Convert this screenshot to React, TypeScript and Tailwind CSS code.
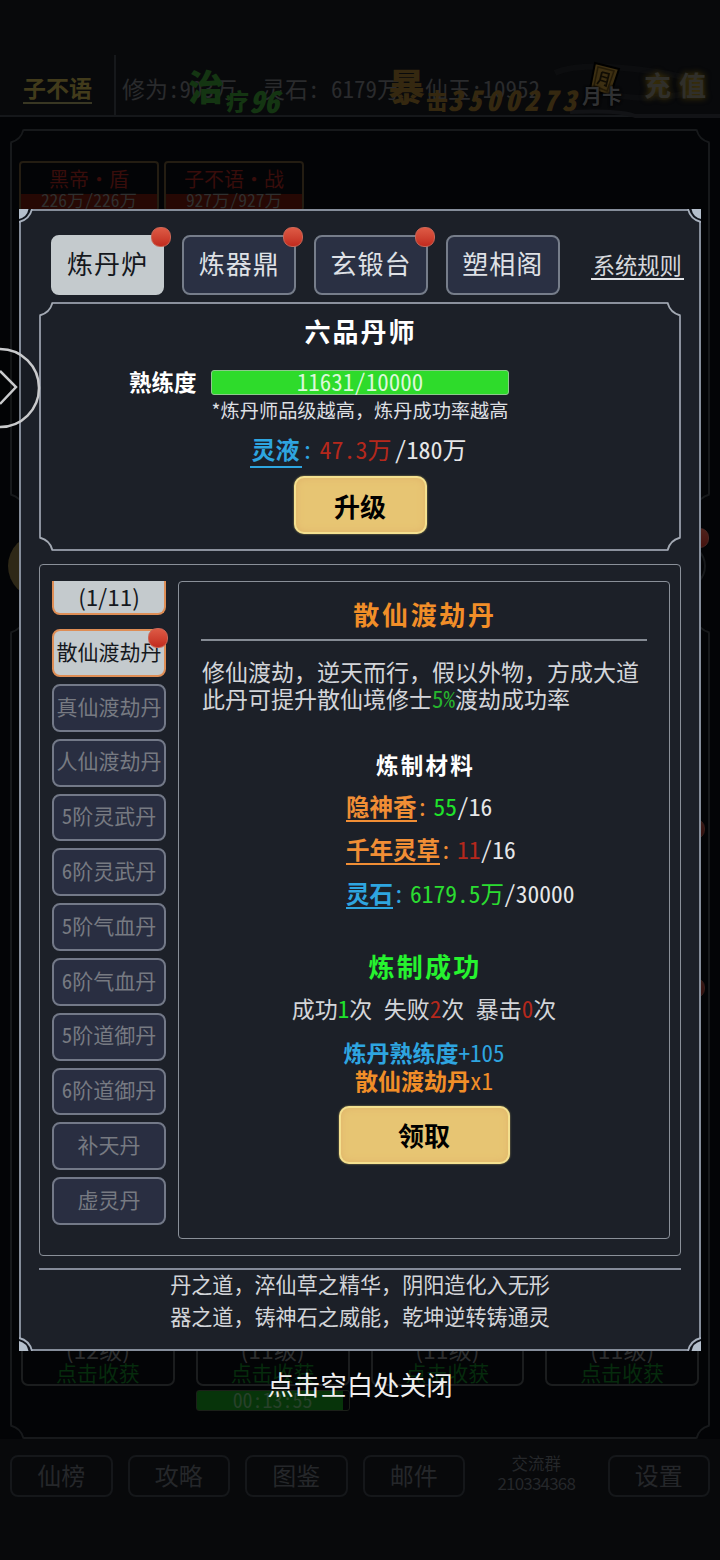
import type { ReactNode } from "react";

const TABS = [
  { label: "炼丹炉", active: true, dot: true },
  { label: "炼器鼎", active: false, dot: true },
  { label: "玄锻台", active: false, dot: true },
  { label: "塑相阁", active: false, dot: false },
];

const RECIPES = [
  "真仙渡劫丹",
  "人仙渡劫丹",
  "5阶灵武丹",
  "6阶灵武丹",
  "5阶气血丹",
  "6阶气血丹",
  "5阶道御丹",
  "6阶道御丹",
  "补天丹",
  "虚灵丹",
];

const PLOTS = ["(12级)", "(11级)", "(11级)", "(11级)"];

const NAV_LEFT = ["仙榜", "攻略", "图鉴", "邮件"];

function RedDot({ className }: { className: string }) {
  return (
    <span
      className={`absolute size-5 rounded-[9px] border border-[#c96555] bg-gradient-to-b from-[#dd5a45] to-[#c22a1e] ${className}`}
    />
  );
}

// Concave corner that replaces the square corner of a bordered box
function Notch({ className, fill, stroke }: { className: string; fill: string; stroke: string }) {
  return (
    <svg viewBox="0 0 14 14" className={`absolute size-3.5 ${className}`}>
      <path d="M0 0H13.5Q11 11 0 13.5Z" fill={fill} />
      <path d="M13.5 0.5Q11 11 0.5 13.5" fill="none" stroke={stroke} strokeWidth="1.8" />
    </svg>
  );
}

function Notches({ fill, stroke }: { fill: string; stroke: string }) {
  return (
    <>
      <Notch className="-left-0.5 -top-0.5" fill={fill} stroke={stroke} />
      <Notch className="-right-0.5 -top-0.5 -scale-x-100" fill={fill} stroke={stroke} />
      <Notch className="-bottom-0.5 -left-0.5 -scale-y-100" fill={fill} stroke={stroke} />
      <Notch className="-bottom-0.5 -right-0.5 -scale-100" fill={fill} stroke={stroke} />
    </>
  );
}

function ModalCorner({ className }: { className: string }) {
  return (
    <svg viewBox="0 0 14 14" className={`absolute size-3.5 ${className}`}>
      <path d="M0 0H13Q11 11 0 13Z" fill="#10141c" />
      <path d="M0 0H9.5Q8 8 0 10Z" fill="#b4bfcc" />
      <path d="M13 0Q10.5 10.5 0 13" fill="none" stroke="#a7b0bd" strokeWidth="1.8" />
    </svg>
  );
}

function GoldButton({ children, className }: { children: ReactNode; className: string }) {
  return (
    <button
      className={`flex h-[58px] shrink-0 items-center justify-center rounded-[10px] border-2 border-[#f4e08f] bg-[#e7c573] text-[26px] font-bold text-black shadow-[inset_0_0_7px_#e0b36a,0_0_2px_#a79a5c] ${className}`}
    >
      {children}
    </button>
  );
}

function Material({
  name,
  have,
  need,
  nameClass,
  haveClass,
}: {
  name: string;
  have: string;
  need: string;
  nameClass: string;
  haveClass: string;
}) {
  return (
    <div className="flex h-[30px] items-start whitespace-nowrap text-[23.5px] leading-[28px]">
      <span className={`h-[30px] border-b-2 border-current font-bold ${nameClass}`}>{name}</span>
      <span className={`w-[17px] ${nameClass}`}>:</span>
      <span className={haveClass}>{have}</span>
      <span className="text-[#e6e7e9]">/{need}</span>
    </div>
  );
}

function Background() {
  return (
    <div className="flex h-[1560px] flex-col bg-[#030406]">
      <header className="relative flex h-[117px] shrink-0 items-end border-b-2 border-[#15171a] bg-[#08090b]">
        <div className="flex h-[60px] w-[116px] justify-end border-r-2 border-[#16181b] pr-[22px] pt-[17px]">
          <span className="h-[32px] border-b-2 border-[#393723] text-[23px] font-bold leading-[30px] text-[#423b1b]">
            子不语
          </span>
        </div>
        <div className="flex h-[60px] gap-[25px] whitespace-nowrap pl-1.5 pt-[18px] text-[23px] leading-[30px] text-[#2a2b2d]">
          <span>修为:903万</span>
          <span>灵石: 6179万</span>
          <span>仙玉:10952</span>
        </div>
        <svg viewBox="0 0 170 60" className="absolute left-[550px] top-[58px] h-[60px] w-[170px]">
          <path d="M5 15Q30 3 100 13T140 35Q90 45 60 35" fill="none" stroke="#0c0d0f" strokeWidth="6" />
          <path d="M20 54Q70 52 85 58H170" fill="none" stroke="#121316" strokeWidth="4" />
        </svg>
        <span className="absolute left-[188px] top-[64px] text-[36px] font-black leading-[42px] text-[#143512]">治</span>
        <span className="absolute left-[226px] top-[86px] flex items-center text-[23px] font-black leading-[28px] text-[#143512]">
          疗
          <span className="text-[30px] italic">96</span>
        </span>
        <span className="absolute left-[388px] top-[64px] text-[37px] font-black leading-[42px] text-[#352810]">暴</span>
        <span className="absolute left-[426px] top-[85px] flex items-center text-[22px] font-black leading-[28px] text-[#352810]">
          击
          <span className="text-[28px] italic tracking-[5px]">3500273</span>
        </span>
        <svg viewBox="0 0 34 38" className="absolute left-[588px] top-[60px] h-[38px] w-[34px]">
          <path d="M7 3L31 9L22 36L2 29Z" fill="#3d2f12" stroke="#000" strokeWidth="2" />
          <path d="M10 7L26 11L19 31L6 26Z" fill="none" stroke="#241b08" strokeWidth="1.5" />
          <path d="M14 12L21 14L18 26L16 25M14 12L12 20L9 24M13 16L19 18M12 20L18 22" fill="none" stroke="#100c04" strokeWidth="1.8" />
        </svg>
        <span className="absolute left-[582px] top-[83px] text-[20px] font-bold leading-[26px] text-[#303133] [text-shadow:0_0_3px_#000,0_0_2px_#000]">
          月卡
        </span>
        <span className="absolute left-[644px] top-[68px] text-[27px] font-bold leading-[34px] tracking-[8px] text-[#302f2a] [text-shadow:0_0_6px_#4d3d08]">
          充值
        </span>
      </header>

      <section className="relative mx-2.5 mt-3 flex h-[379px] shrink-0 gap-[5px] border-2 border-[#17191b] px-[7px] pt-[30px]">
        <Notches fill="#030406" stroke="#17191b" />
        <div className="flex h-[50px] w-[140px] flex-col rounded-[4px] border-2 border-[#241d12] text-center">
          <span className="h-[31px] text-[20px] leading-[32px] text-[#380d0b]">黑帝·盾</span>
          <span className="h-[17px] bg-[#260804] text-[17.5px] leading-[11px] text-[#30302f]">226万/226万</span>
        </div>
        <div className="flex h-[50px] w-[140px] flex-col rounded-[4px] border-2 border-[#241d12] text-center">
          <span className="h-[31px] text-[20px] leading-[32px] text-[#380d0b]">子不语·战</span>
          <span className="h-[17px] bg-[#260804] text-[17.5px] leading-[11px] text-[#30302f]">927万/927万</span>
        </div>
      </section>

      <div className="flex h-[111px] shrink-0 items-center justify-between px-2 pt-1">
        <span className="size-16 rounded-full bg-[#2e2817]" />
        <span className="relative mr-1.5 size-[46px] rounded-full border-2 border-[#17191b]">
          <RedDot className="-right-[5px] -top-[17px] opacity-35" />
        </span>
      </div>

      <section className="relative mx-2.5 flex h-[820px] shrink-0 flex-col justify-end border-2 border-[#17191b] px-[9px] pb-[26px]">
        <Notches fill="#030406" stroke="#17191b" />
        <RedDot className="right-[3px] top-[198px] opacity-25" />
        <RedDot className="right-[3px] top-[357px] opacity-25" />
        <div className="flex gap-[21px]">
          {PLOTS.map((level, i) => (
            <div key={i} className="w-[154px]">
              <div className="h-[50px] rounded-[7px] border-2 border-[#1b1d1e] text-center">
                <div className="h-[25px] text-[23px] leading-[22px] text-[#2c2d2e] [font-feature-settings:normal]">
                  {level}
                </div>
                <div className="text-[21px] leading-[19px] text-[#062b0d]">点击收获</div>
              </div>
              <div className="mt-1 h-[21px]">
                {i === 1 && (
                  <div className="h-full rounded-[3px] border border-[#1b2019] bg-gradient-to-r from-[#07340a] from-[96%] to-[#030406] to-[96%] text-center text-[20px] leading-[18px] text-[#27412a]">
                    00:13:55
                  </div>
                )}
              </div>
            </div>
          ))}
        </div>
      </section>

      <footer className="flex flex-1 items-start gap-[15px] bg-[#08090b] px-2.5 pt-4 text-[24px] text-[#25272a]">
        {NAV_LEFT.map((label) => (
          <span
            key={label}
            className="flex h-[42px] w-[102.5px] items-center justify-center rounded-[8px] border-2 border-[#15171a] pb-0.5"
          >
            {label}
          </span>
        ))}
        <span className="-mt-0.5 flex flex-1 flex-col items-center text-[16.5px] leading-[20px] [font-feature-settings:normal]">
          交流群
          <span className="text-[17px] tracking-[-0.8px]">210334368</span>
        </span>
        <span className="flex h-[42px] w-[102.5px] items-center justify-center rounded-[8px] border-2 border-[#15171a] pb-0.5">
          设置
        </span>
      </footer>
    </div>
  );
}

function MasteryPanel() {
  return (
    <section className="relative mt-[7px] flex h-[249px] flex-col items-center border-2 border-[#8b919d]">
      <Notches fill="#1c2028" stroke="#a3a9b3" />
      <h2 className="mt-[11px] pl-px text-[26px] font-bold leading-[32px] tracking-[2px] text-white">六品丹师</h2>
      <div className="mt-[23px] flex h-[25px] w-full items-start pl-[88px]">
        <span className="w-[82px] text-[22.5px] font-bold leading-[23px] text-white">熟练度</span>
        <div className="h-[25px] w-[298px] rounded-[3px] border border-[#8dc98d] bg-[#2edb2b] text-center text-[23px] leading-[21px] text-[#dcf8da]">
          11631/10000
        </div>
      </div>
      <p className="mt-1 whitespace-nowrap text-[19.2px] leading-[22px] text-[#dddfe2] [font-feature-settings:normal]">
        *炼丹师品级越高，炼丹成功率越高
      </p>
      <div className="mt-[14px] flex h-[33px] whitespace-nowrap pr-1 text-[24px] leading-[28px]">
        <span className="h-[33px] border-b-2 border-[#2ea5e0] px-0.5 font-bold text-[#2ea5e0]">灵液</span>
        <span className="w-[18px] text-[#2ea5e0]">:</span>
        <span className="text-[#b5281c]">47.3万</span>
        <span className="ml-[3px] text-[#e6e7e9]">/180万</span>
      </div>
      <GoldButton className="mt-2 w-[133px]">升级</GoldButton>
    </section>
  );
}

function RecipeList() {
  return (
    <div className="flex w-[114px] shrink-0 flex-col gap-[7px] text-[21px]">
      <div className="mb-[7px] h-[34px] rounded-b-[8px] border-2 border-t-0 border-[#de8d55] bg-[#c4cacd] text-center text-[22.5px] leading-[30px] text-[#15181d] [font-feature-settings:normal]">
        (1/11)
      </div>
      <div className="relative flex h-[48px] items-center justify-center whitespace-nowrap rounded-[8px] border-2 border-[#de8d55] bg-[#c4cacd] pb-[3px] text-[#15181d]">
        散仙渡劫丹
        <RedDot className="-right-1 -top-[3px]" />
      </div>
      {RECIPES.map((name) => (
        <div
          key={name}
          className="flex h-[47.8px] items-center justify-center whitespace-nowrap rounded-[8px] border-2 border-[#737988] bg-[#292e41] pb-[3px] text-[#777a82]"
        >
          {name}
        </div>
      ))}
    </div>
  );
}

function RecipeDetail() {
  return (
    <div className="flex h-[658px] w-[492px] shrink-0 flex-col items-center rounded-[4px] border-[1.5px] border-[#8a9099]">
      <h2 className="mt-[15px] pl-[2px] text-[26px] font-bold leading-[34px] tracking-[2.7px] text-[#f18e28]">散仙渡劫丹</h2>
      <div className="mt-2 h-0.5 w-[446px] bg-[#858b94]" />
      <p className="mt-[17px] w-[444px] whitespace-nowrap text-[23px] leading-[27px] text-[#d3d5d9] [font-feature-settings:normal]">
        修仙渡劫，逆天而行，假以外物，方成大道
        <br />
        此丹可提升散仙境修士<span className="text-[#26b52d] [font-feature-settings:'hwid']">5%</span>渡劫成功率
      </p>
      <h3 className="mt-[37px] pl-[3px] text-[22.5px] font-bold leading-[30px] tracking-[2.2px] text-white">炼制材料</h3>
      <div className="ml-[167px] mt-[13px] flex flex-col gap-[13.3px] self-start">
        <Material name="隐神香" have="55" need="16" nameClass="text-[#f18e35]" haveClass="text-[#1fe32b]" />
        <Material name="千年灵草" have="11" need="16" nameClass="text-[#f18e35]" haveClass="text-[#b5281c]" />
        <Material name="灵石" have="6179.5万" need="30000" nameClass="text-[#2ea5e0]" haveClass="text-[#2bdc31]" />
      </div>
      <h3 className="mt-[40px] pl-[2px] text-[26px] font-bold leading-[34px] tracking-[2.2px] text-[#26f32f]">炼制成功</h3>
      <p className="mt-2.5 flex gap-[11.5px] text-[23px] leading-[30px] text-[#d3d5d9]">
        <span>
          成功<span className="text-[#1fe32b]">1</span>次
        </span>
        <span>
          失败<span className="text-[#b5281c]">2</span>次
        </span>
        <span>
          暴击<span className="text-[#b5281c]">0</span>次
        </span>
      </p>
      <p className="mt-[15px] text-[23px] leading-[28px] text-[#2ea5e0]">
        <b>炼丹熟练度</b>+105
      </p>
      <p className="text-[23px] leading-[28px] text-[#f18e28]">
        <b>散仙渡劫丹</b>x1
      </p>
      <GoldButton className="mt-3 w-[171px]">领取</GoldButton>
    </div>
  );
}

export default function App() {
  return (
    <div className="relative h-[1560px] w-[720px] overflow-hidden bg-black font-['Noto_Sans_CJK_SC',sans-serif] [font-feature-settings:'hwid']">
      <Background />

      <div className="absolute inset-x-0 top-[209px] flex flex-col items-center">
        <main className="relative flex h-[1142px] w-[682px] flex-col border-2 border-[#858d9a] bg-[#1c2028] px-[18px]">
          <ModalCorner className="-left-0.5 -top-0.5" />
          <ModalCorner className="-right-0.5 -top-0.5 -scale-x-100" />
          <ModalCorner className="-bottom-0.5 -left-0.5 -scale-y-100" />
          <ModalCorner className="-bottom-0.5 -right-0.5 -scale-100" />

          <nav className="mt-6 flex items-center gap-[18px] pl-[11.5px]">
            {TABS.map((tab) => (
              <button
                key={tab.label}
                className={`relative h-[60px] w-[113.8px] shrink-0 rounded-[8px] border-2 pb-1.5 text-[26px] tracking-[1px] ${
                  tab.active
                    ? "border-[#c4cacd] bg-[#c4cacd] text-[#15181d]"
                    : "border-[#767d8a] bg-[#2a3043] text-[#dfe1e6]"
                }`}
              >
                {tab.label}
                {tab.dot && <RedDot className="-right-[9px] -top-[10px]" />}
              </button>
            ))}
            <a className="ml-[13px] shrink-0 whitespace-nowrap border-b-2 border-[#e2e4e7] px-0.5 text-[22.3px] leading-[27px] text-[#d6d8dc]">
              系统规则
            </a>
          </nav>

          <MasteryPanel />

          <section className="mt-[13px] flex h-[692px] gap-3 rounded-[4px] border-[1.5px] border-[#8a9099] pl-3 pt-4">
            <RecipeList />
            <RecipeDetail />
          </section>

          <div className="mt-[12px] h-0.5 shrink-0 bg-[#858b99]" />
          <p className="-mt-[2px] whitespace-nowrap text-center text-[21.1px] leading-[32px] text-[#d3d5d9] [font-feature-settings:normal]">
            丹之道，淬仙草之精华，阴阳造化入无形
            <br />
            器之道，铸神石之威能，乾坤逆转铸通灵
          </p>
        </main>
        <p className="mt-[15px] text-[26.5px] leading-[36px] text-[#eeeeee]">点击空白处关闭</p>
      </div>

      {/* drawer handle on the left edge */}
      <svg viewBox="0 0 42 82" className="absolute left-0 top-[347px] h-[82px] w-[42px]">
        <circle cx="0" cy="41" r="39" fill="#000" fillOpacity="0.15" stroke="#c9cacc" strokeWidth="2.5" />
        <path d="M0 24L16 40L0 57" fill="none" stroke="#c9cacc" strokeWidth="2.5" />
      </svg>
    </div>
  );
}
